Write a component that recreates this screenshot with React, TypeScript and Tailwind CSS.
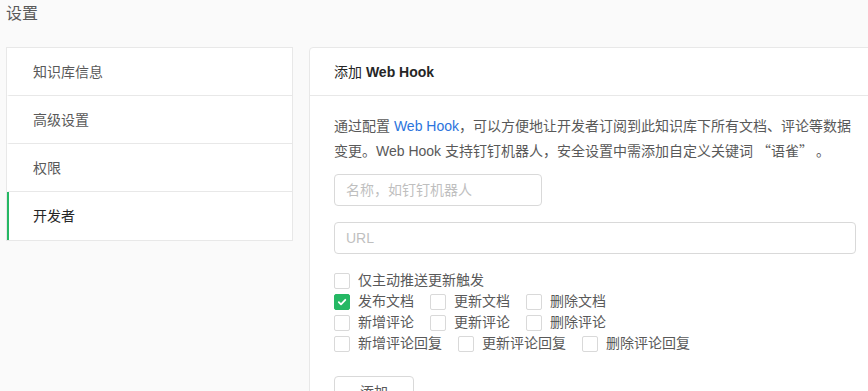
import React from "react";

const menu = ["知识库信息", "高级设置", "权限", "开发者"];

const rows: { label: string; checked?: boolean }[][] = [
  [{ label: "仅主动推送更新触发" }],
  [{ label: "发布文档", checked: true }, { label: "更新文档" }, { label: "删除文档" }],
  [{ label: "新增评论" }, { label: "更新评论" }, { label: "删除评论" }],
  [{ label: "新增评论回复" }, { label: "更新评论回复" }, { label: "删除评论回复" }],
];

const Checkbox = ({ label, checked }: { label: string; checked?: boolean }) => (
  <label className="flex items-center mr-2 leading-[21px] cursor-pointer">
    {checked ? (
      <span className="w-4 h-4 rounded-[2px] bg-[#25b864] border border-[#25b864] flex items-center justify-center">
        <svg width="10" height="10" viewBox="0 0 10 10" fill="none">
          <path
            d="M1.8 5.2 L4 7.3 L8.3 2.8"
            stroke="white"
            strokeWidth="1.8"
            strokeLinecap="round"
            strokeLinejoin="round"
          />
        </svg>
      </span>
    ) : (
      <span className="w-4 h-4 rounded-[2px] bg-white border border-[#d9d9d9]" />
    )}
    <span className="px-2 text-[#595959]">{label}</span>
  </label>
);

const App = () => {
  const active = 3;

  return (
    <div
      className="w-full h-[391px] overflow-hidden bg-[#fafafa] text-sm"
      style={{ fontFamily: '"Liberation Sans", "Noto Sans CJK SC", sans-serif' }}
    >
      <div className="pl-[6px]">
        <h1 className="h-7 leading-7 text-base text-[#595959]">设置</h1>
        <div className="flex items-start gap-[16px] mt-[19px]">
          <nav className="w-[287px] shrink-0 bg-white border border-[#e8e8e8]">
            {menu.map((item, i) => (
              <div
                key={item}
                className={`h-12 flex items-center pl-6 border-l-2 ${
                  i === active
                    ? "border-l-[#25b864] text-[#262626]"
                    : "border-l-transparent text-[#595959]"
                } ${i < menu.length - 1 ? "border-b border-b-[#e8e8e8]" : ""}`}
              >
                {item}
              </div>
            ))}
          </nav>

          <section className="w-[572px] shrink-0 bg-white border border-[#e8e8e8] rounded-tl-[4px]">
            <div className="h-12 flex items-center px-6 border-b border-[#e8e8e8] text-[#262626]">
              添加&nbsp;<span className="font-semibold">Web Hook</span>
            </div>
            <div className="px-6 pt-[18px]">
              <p className="leading-6 text-[#595959] max-w-[520px] mb-[11px]">
                通过配置 <span className="text-[#2b74dd]">Web Hook</span>
                ，可以方便地让开发者订阅到此知识库下所有文档、评论等数据变更。Web Hook
                支持钉钉机器人，安全设置中需添加自定义关键词{" "}
                <span style={{ fontFamily: '"Noto Sans CJK SC", sans-serif' }}>“语雀” 。</span>
              </p>
              <input
                className="block w-52 h-8 px-[11px] border border-[#d9d9d9] rounded-[4px] placeholder:text-[#bfbfbf] outline-none"
                placeholder="名称，如钉钉机器人"
              />
              <input
                className="block w-full h-8 px-[11px] mt-4 border border-[#d9d9d9] rounded-[4px] placeholder:text-[#bfbfbf] outline-none"
                placeholder="URL"
              />
              <div className="mt-4 flex flex-col">
                {rows.map((row, i) => (
                  <div key={i} className="flex">
                    {row.map((c) => (
                      <Checkbox key={c.label} label={c.label} checked={c.checked} />
                    ))}
                  </div>
                ))}
              </div>
              <button className="mt-[22px] w-20 h-8 border border-[#d9d9d9] rounded-[4px] bg-white text-[#595959]">
                添加
              </button>
            </div>
          </section>
        </div>
      </div>
    </div>
  );
};

export default App;
